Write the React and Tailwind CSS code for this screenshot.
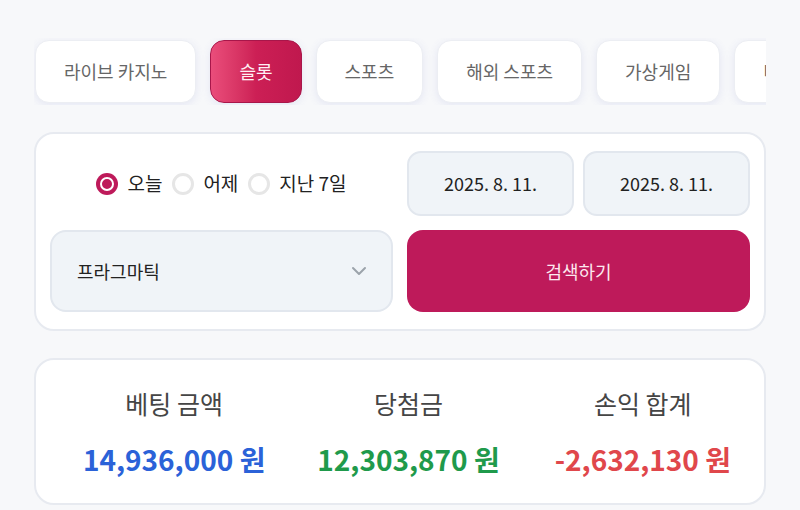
import { ChevronDown } from 'lucide-react';

const tabs = ['라이브 카지노', '슬롯', '스포츠', '해외 스포츠', '가상게임', '미니게임'];

const Radio = ({ label, checked }) => (
  <label className="flex items-center gap-[9px] cursor-pointer">
    {checked ? (
      <span className="w-[22px] h-[22px] rounded-full bg-[#be1a5a] flex items-center justify-center">
        <span className="w-[14px] h-[14px] rounded-full border-2 border-white bg-[#be1a5a]" />
      </span>
    ) : (
      <span className="w-[22px] h-[22px] rounded-full border-[3px] border-[#e6e6e6] bg-white" />
    )}
    <span className="text-[19px] text-[#222]">{label}</span>
  </label>
);

export default function App() {
  return (
    <div
      className="min-h-screen bg-[#f7f8fa] px-[34px] pt-[38px]"
      style={{ fontFamily: '"Noto Sans CJK KR", "Noto Sans", sans-serif' }}
    >
      {/* tabs */}
      <div className="flex gap-[14px] overflow-hidden pt-[2px] pb-[2px] pl-px">
        {tabs.map((t, i) =>
          i === 1 ? (
            <button
              key={t}
              className="shrink-0 h-[63px] px-[28px] rounded-[14px] border border-[#a8164a] bg-gradient-to-r from-[#ea4d7b] via-[#cc1f55] to-[#c0184e] text-[#fff0f4] text-[18px] shadow-[0_2px_8px_rgba(100,110,200,0.12)]"
            >
              {t}
            </button>
          ) : (
            <button
              key={t}
              className="shrink-0 h-[63px] px-[28px] rounded-[14px] border border-[#eceef3] bg-white text-[#666] text-[18px] shadow-[0_2px_8px_rgba(100,110,200,0.12)]"
            >
              {t}
            </button>
          )
        )}
      </div>

      {/* search card */}
      <div className="mt-[27px] bg-white border-2 border-[#e7eaf0] rounded-[20px] px-[14px] py-[17px] grid grid-cols-2 gap-x-[14px] gap-y-[14px]">
        <div className="h-[65px] flex items-center justify-center gap-[10px]">
          <Radio label="오늘" checked />
          <Radio label="어제" />
          <Radio label="지난 7일" />
        </div>
        <div className="flex gap-[9px]">
          <div className="flex-1 h-[65px] rounded-[14px] bg-[#f0f4f8] border-2 border-[#e2e7ee] flex items-center justify-center text-[18px] text-[#222]">
            2025. 8. 11.
          </div>
          <div className="flex-1 h-[65px] rounded-[14px] bg-[#f0f4f8] border-2 border-[#e2e7ee] flex items-center justify-center text-[18px] text-[#222]">
            2025. 8. 11.
          </div>
        </div>
        <div className="h-[82px] rounded-[16px] bg-[#f0f4f8] border-2 border-[#e2e7ee] flex items-center justify-between pl-[25px] pr-[20px]">
          <span className="text-[18px] text-[#222]">프라그마틱</span>
          <ChevronDown size={24} strokeWidth={2} className="text-[#9ca3ab]" />
        </div>
        <button className="h-[82px] rounded-[16px] bg-[#be1a5a] text-[#fde8ef] text-[18px]">
          검색하기
        </button>
      </div>

      {/* summary card */}
      <div className="mt-[27px] bg-white border-2 border-[#e7eaf0] rounded-[20px] h-[147px] grid grid-cols-3 pl-[21px] pr-[4px] pt-[27px]">
        <div className="flex flex-col items-center">
          <span className="text-[25px] leading-[32px] text-[#454545]">베팅 금액</span>
          <span className="mt-[22px] text-[28px] leading-[36px] font-bold text-[#2b62d8]">14,936,000 원</span>
        </div>
        <div className="flex flex-col items-center">
          <span className="text-[25px] leading-[32px] text-[#454545]">당첨금</span>
          <span className="mt-[22px] text-[28px] leading-[36px] font-bold text-[#1f9a4b]">12,303,870 원</span>
        </div>
        <div className="flex flex-col items-center">
          <span className="text-[25px] leading-[32px] text-[#454545]">손익 합계</span>
          <span className="mt-[22px] text-[28px] leading-[36px] font-bold text-[#e0474b]">-2,632,130 원</span>
        </div>
      </div>
    </div>
  );
}
